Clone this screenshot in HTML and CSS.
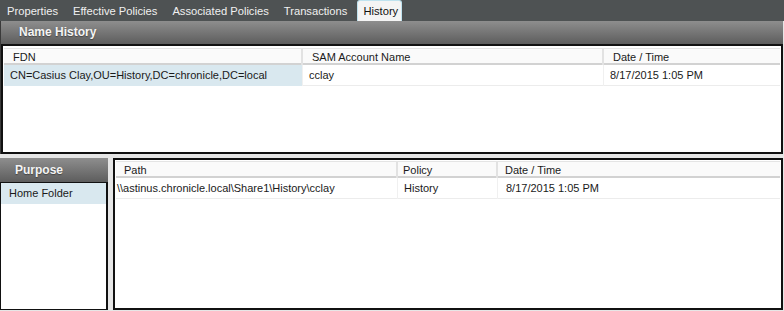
FILE: index.html
```html
<!DOCTYPE html>
<html lang="en">
  <head>
    <meta charset="utf-8">
    <title>History</title>
    <link rel="stylesheet" href="styles.css">
  </head>
  <body>
    <div class="tabs">
      <span class="tab">Properties</span>
      <span class="tab">Effective Policies</span>
      <span class="tab">Associated Policies</span>
      <span class="tab">Transactions</span>
      <span class="tab active">History</span>
    </div>

    <div class="name-panel">
      <div class="panel-title">Name History</div>
      <div class="grid-box top-grid">
        <div class="grid-row head">
          <div class="cell">FDN</div>
          <div class="cell">SAM Account Name</div>
          <div class="cell">Date / Time</div>
        </div>
        <div class="grid-row data">
          <div class="cell selected">CN=Casius Clay,OU=History,DC=chronicle,DC=local</div>
          <div class="cell">cclay</div>
          <div class="cell">8/17/2015 1:05 PM</div>
        </div>
      </div>
    </div>

    <div class="lower">
      <div class="purpose">
        <div class="panel-title small">Purpose</div>
        <div class="purpose-list">
          <div class="purpose-item">Home Folder</div>
        </div>
      </div>
      <div class="grid-box bottom-grid">
        <div class="grid-row head">
          <div class="cell">Path</div>
          <div class="cell">Policy</div>
          <div class="cell">Date / Time</div>
        </div>
        <div class="grid-row data">
          <div class="cell">\\astinus.chronicle.local\Share1\History\cclay</div>
          <div class="cell">History</div>
          <div class="cell">8/17/2015 1:05 PM</div>
        </div>
      </div>
    </div>
  </body>
</html>
```

FILE: styles.css
```css
body {
  margin: 0;
  padding: 0;
  background: #e6e6e6;
  font-family: "Liberation Sans", Arial, sans-serif;
  font-size: 11px;
  color: #1a1a1a;
  width: 784px;
  height: 311px;
  overflow: hidden;
}

/* barre d'onglets */
.tabs {
  display: flex;
  align-items: flex-end;
  height: 21px;
  background: #4e5253;
  font-size: 11.2px;
}

.tab {
  color: #f0f0f0;
  padding: 0 7px 0 7px;
  margin-right: 1px;
  height: 19px;
  line-height: 19px;
}

.tab.active {
  background: #f4f4f4;
  color: #111;
  height: 20px;
  line-height: 21px;
  padding: 0 3px 0 5px;
  border: 1px solid #bfe2ee;
  border-bottom: none;
  border-radius: 3px 3px 0 0;
  margin-left: 2px;
}

/* titres en dégradé */
.panel-title {
  height: 23px;
  line-height: 23px;
  padding-left: 18px;
  font-size: 12px;
  font-weight: bold;
  color: #f4f4f4;
  text-shadow: 0 1px 1px #444;
  background: linear-gradient(to bottom, #8e8e8e, #5d5d5d);
}

.name-panel {
  width: 783px;
  border-left: 1px solid #3a3a3a;
  box-sizing: border-box;
}

.grid-box {
  background: #fff;
  border: 2px solid #111;
  box-sizing: border-box;
}

.top-grid {
  height: 110px;
  padding-top: 2px;
}

.grid-row {
  display: grid;
}

.top-grid .grid-row {
  grid-template-columns: 299px 301px 176px;
}

.bottom-grid .grid-row {
  grid-template-columns: 282px 100px 283px;
}

.grid-row.head {
  height: 17px;
  line-height: 16px;
  background: #fafafa;
  border-top: 1px solid #e4e4e4;
  border-bottom: 2px solid #d2d2d2;
  box-sizing: border-box;
  margin: 0 1px;
}

.grid-row.head .cell {
  padding-left: 9px;
  border-right: 2px solid #e2e2e2;
}

.grid-row.head .cell:last-child {
  border-right: none;
}

.grid-row.data {
  height: 20px;
  line-height: 21px;
  border-bottom: 1px solid #ececec;
  margin: 0 1px;
}

.grid-row.data .cell {
  padding-left: 6px;
  border-right: 1px solid #f0f0f0;
  white-space: nowrap;
}

.grid-row.data .cell:last-child {
  border-right: none;
}

.cell.selected {
  background: #d9e8ef;
}

/* partie basse */
.lower {
  display: flex;
  margin-top: 4px;
  gap: 5px;
}

.purpose {
  width: 108px;
  display: flex;
  flex-direction: column;
}

.panel-title.small {
  height: 24px;
  line-height: 24px;
  padding-left: 15px;
}

.purpose-list {
  background: #fff;
  border: 1px solid #111;
  border-right-width: 2px;
  height: 128px;
  box-sizing: border-box;
}

.purpose-item {
  background: #d9e8ef;
  height: 21px;
  line-height: 21px;
  padding-left: 8px;
}

.bottom-grid {
  width: 670px;
  height: 152px;
  padding-top: 1px;
}

.bottom-grid .grid-row.head .cell {
  padding-left: 8px;
}

.bottom-grid .grid-row.head .cell:nth-child(2) {
  padding-left: 5px;
}

.bottom-grid .grid-row.head .cell:nth-child(3) {
  padding-left: 7px;
}

.bottom-grid .grid-row.data .cell {
  padding-left: 1px;
}

.bottom-grid .grid-row.data .cell:nth-child(2) {
  padding-left: 6px;
}

.bottom-grid .grid-row.data .cell:nth-child(3) {
  padding-left: 8px;
}
```
